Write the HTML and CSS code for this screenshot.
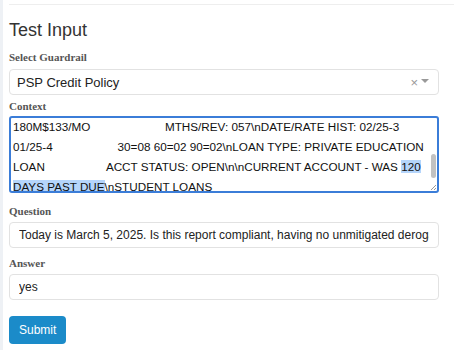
FILE: index.html
```html
<!DOCTYPE html>
<html lang="en">

<head>
    <meta charset="UTF-8">
    <meta name="viewport" content="width=device-width, initial-scale=1.0">
    <title>Test Input</title>
    <link rel="stylesheet" href="styles.css">
</head>

<body>
    <div id="panel">
        <div class="top_rule"></div>
        <h2 class="heading">Test Input</h2>

        <form class="test_form">
            <label class="field_label first_label">Select Guardrail</label>
            <div class="select_box">
                <span class="select_value">PSP Credit Policy</span>
                <span class="select_icons"><span class="clear_x">&times;</span><span class="caret"></span></span>
            </div>

            <label class="field_label context_label">Context</label>
            <div class="context_box">
                <div class="context_text">
                    <div class="ctx_line">180M$133/MO                       MTHS/REV: 057\nDATE/RATE HIST: 02/25-3</div>
                    <div class="ctx_line">01/25-4                    30=08 60=02 90=02\nLOAN TYPE: PRIVATE EDUCATION</div>
                    <div class="ctx_line">LOAN                   ACCT STATUS: OPEN\n\nCURRENT ACCOUNT - WAS <span class="sel">120</span></div>
                    <div class="ctx_line"><span class="sel">DAYS PAST DUE</span>\nSTUDENT LOANS</div>
                </div>
                <!-- scrollbar thumb + resize grip sit over the text -->
                <div class="scroll_thumb"></div>
                <svg class="grip" width="8" height="8" viewBox="0 0 8 8">
                    <path d="M7 2 L2 7 M7 5 L5 7" stroke="#9a9a9a" stroke-width="1" fill="none" />
                </svg>
            </div>

            <label class="field_label question_label">Question</label>
            <input type="text" class="text_input" value="Today is March 5, 2025. Is this report compliant, having no unmitigated derogatory items?">

            <label class="field_label answer_label">Answer</label>
            <input type="text" class="text_input" value="yes">

            <div class="btns">
                <button type="button" class="submit_btn">Submit</button>
            </div>
        </form>
    </div>
</body>

</html>
```

FILE: styles.css
```css
body {
    margin: 0;
    background: #ffffff;
    font-family: "Liberation Sans", Arial, sans-serif;
    color: #333333;
}

#panel {
    height: 350px;
    box-sizing: border-box;
    border-left: 3px solid #eef1f5;
    padding: 0 15px 0 6px;
    overflow: hidden;
}

.top_rule {
    margin-top: 4px;
    height: 1px;
    background: #eeeeee;
    margin-right: -15px;
}

.heading {
    margin: 14px 0 0 0;
    font-size: 18px;
    line-height: 22px;
    font-weight: normal;
    color: #333333;
}

.test_form {
    display: flex;
    flex-direction: column;
}

.field_label {
    font-family: "Liberation Serif", "Times New Roman", serif;
    font-weight: bold;
    font-size: 11px;
    line-height: 14px;
    color: #555555;
    margin-top: 3px;
    margin-bottom: 4px;
}

.first_label {
    margin-top: 9px;
    margin-bottom: 5px;
}

.context_label {
    margin-top: 4px;
    margin-bottom: 3px;
}

.question_label {
    margin-top: 11px;
}

.answer_label {
    margin-top: 8px;
}

.select_box {
    height: 26px;
    box-sizing: border-box;
    border: 1px solid #e2e2e2;
    border-radius: 4px;
    display: flex;
    align-items: center;
    justify-content: space-between;
    padding: 0 9px 0 7px;
    font-size: 13px;
    color: #222222;
}

.select_icons {
    display: flex;
    align-items: center;
    gap: 3px;
    color: #999999;
}

.clear_x {
    font-size: 13px;
}

.caret {
    width: 0;
    height: 0;
    border-left: 4px solid transparent;
    border-right: 4px solid transparent;
    border-top: 4px solid #999999;
    margin-top: -3px;
}

.context_box {
    position: relative;
    height: 77px;
    box-sizing: border-box;
    border: 2px solid #3b7dd8;
    border-radius: 3px;
    overflow: hidden;
}

.context_text {
    margin-top: -1px;
    padding: 0 10px 0 2px;
    font-size: 11.7px;
    line-height: 20px;
    color: #111111;
}

.ctx_line {
    white-space: pre;
}

.sel {
    background: #b5d5fb;
}

.scroll_thumb {
    position: absolute;
    right: 1px;
    top: 36px;
    width: 5px;
    height: 24px;
    border-radius: 3px;
    background: #c2c2c2;
}

.grip {
    position: absolute;
    right: 0;
    bottom: 0;
}

.text_input {
    height: 26px;
    box-sizing: border-box;
    border: 1px solid #e2e2e2;
    border-radius: 4px;
    padding: 0 9px 0 9px;
    font-family: "Liberation Sans", Arial, sans-serif;
    font-size: 12px;
    color: #222222;
    outline: none;
}

.btns {
    margin-top: 16px;
}

.submit_btn {
    background: #1b8bc9;
    color: #ffffff;
    border: none;
    border-radius: 4px;
    height: 28px;
    padding: 0 10px;
    font-family: "Liberation Sans", Arial, sans-serif;
    font-size: 12px;
}
```
